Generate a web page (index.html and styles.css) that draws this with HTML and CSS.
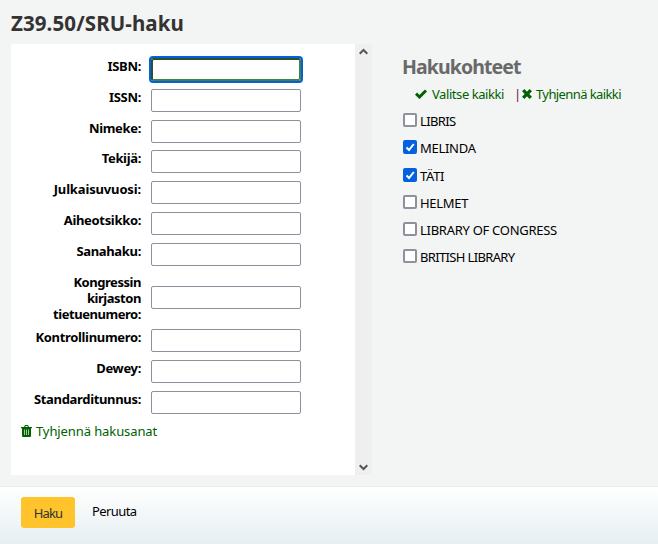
FILE: index.html
```
<!DOCTYPE html>
<html lang="fi">
<head>
<meta charset="utf-8">
<title>Z39.50/SRU-haku</title>
<link rel="stylesheet" href="styles.css">
</head>
<body>
<form class="page">
  <h1><span>Z39.50/SRU-haku</span></h1>
  <main class="columns">
    <section class="search">
      <div class="fields">
        <div class="row"><label for="f1">ISBN:</label><input class="text focused" id="f1" type="text"></div>
        <div class="row"><label for="f2">ISSN:</label><input class="text" id="f2" type="text"></div>
        <div class="row"><label for="f3">Nimeke:</label><input class="text" id="f3" type="text"></div>
        <div class="row"><label for="f4">Tekijä:</label><input class="text" id="f4" type="text"></div>
        <div class="row"><label class="wide" for="f5">Julkaisuvuosi:</label><input class="text" id="f5" type="text"></div>
        <div class="row"><label for="f6">Aiheotsikko:</label><input class="text" id="f6" type="text"></div>
        <div class="row"><label for="f7">Sanahaku:</label><input class="text" id="f7" type="text"></div>
        <div class="row tall"><label for="f8">Kongressin kirjaston tietuenumero:</label><input class="text" id="f8" type="text"></div>
        <div class="row"><label for="f9">Kontrollinumero:</label><input class="text" id="f9" type="text"></div>
        <div class="row"><label for="f10">Dewey:</label><input class="text" id="f10" type="text"></div>
        <div class="row"><label for="f11">Standarditunnus:</label><input class="text" id="f11" type="text"></div>
        <a class="link clear"><svg width="11" height="12" viewBox="0 0 11 12"><path fill="currentColor" d="M0 2h3l.7-1.500Q4 0 4.500 0h2q.5 0 .8.500L8 2h3v1.300h-1V11q0 1-1 1H2q-1 0-1-1V3.300H0zM4.200 2h2.600l-.5-1H4.700z" fill-rule="evenodd"/><path d="M3.500 4.500v5.500m2-5.500v5.500m2-5.500v5.500" stroke="#b5d0b5" stroke-width=".9"/></svg><span>Tyhjennä hakusanat</span></a>
      </div>
      <div class="scrollbar">
        <svg width="9" height="7" viewBox="0 0 9 7"><path d="M.7 5.800 4.500 2l3.800 3.800" fill="none" stroke="#555" stroke-width="2"/></svg>
        <svg width="9" height="7" viewBox="0 0 9 7"><path d="M.7 1.200 4.500 5l3.800-3.800" fill="none" stroke="#555" stroke-width="2"/></svg>
      </div>
    </section>
    <section class="targets">
      <h2><span>Hakukohteet</span></h2>
      <div class="actions">
        <a class="link all"><svg width="12" height="10" viewBox="0 0 12 10"><path d="M1 4.700 4.500 8 11 1.500" fill="none" stroke="currentColor" stroke-width="3"/></svg><span>Valitse kaikki</span></a>
        <span class="bar">|</span>
        <a class="link none"><svg width="10" height="10" viewBox="0 0 10 10"><path d="m1.200 1.200 7.600 7.600m0-7.600L1.200 8.800" stroke="currentColor" stroke-width="3.300"/></svg><span>Tyhjennä kaikki</span></a>
      </div>
      <label class="target narrow"><input type="checkbox"><span>LIBRIS</span></label>
      <label class="target"><input type="checkbox" checked><svg viewBox="0 0 14 14"><path d="m3.500 7.500 2.500 2.500 4.800-6"/></svg><span>MELINDA</span></label>
      <label class="target"><input type="checkbox" checked><svg viewBox="0 0 14 14"><path d="m3.500 7.500 2.500 2.500 4.800-6"/></svg><span>TÄTI</span></label>
      <label class="target"><input type="checkbox"><span>HELMET</span></label>
      <label class="target"><input type="checkbox"><span>LIBRARY OF CONGRESS</span></label>
      <label class="target narrow"><input type="checkbox"><span>BRITISH LIBRARY</span></label>
    </section>
  </main>
  <footer>
    <button class="submit" type="button">Haku</button>
    <a class="cancel">Peruuta</a>
  </footer>
</form>
</body>
</html>
```
FILE: styles.css
```
* { box-sizing: border-box; }
body {
  margin: 0;
  background: #f3f4f4;
  color: #000;
  font: 13px/16px "Noto Sans", "Open Sans", sans-serif;
}
.page { height: 544px; display: flex; flex-direction: column; overflow: hidden; }
h1 {
  margin: 0;
  height: 44px;
  padding: 10px 0 0 11px;
  font-size: 20.5px;
  line-height: 27px;
  letter-spacing: 0.1px;
  color: #333;
}
.columns { height: 442px; display: flex; padding-left: 11px; }
.search { width: 361px; height: 431px; display: flex; }
.fields { width: 344px; padding: 10px; background: #fff; }
.row { display: flex; height: 30.8px; padding-top: 4px; }
.row label {
  width: 120px;
  margin-right: 10px;
  font-weight: bold;
  text-align: right;
  letter-spacing: -0.33px;
}
.row .wide { letter-spacing: -0.15px; }
.tall { height: 55.4px; }
.tall label { padding-left: 20px; letter-spacing: -0.45px; }
.tall .text { margin-top: 12.400px; }
.text {
  width: 150px;
  height: 23px;
  margin: 0;
  border: 1px solid #8f8f9d;
  border-radius: 2px;
  background: #fff;
}
.focused {
  border-color: #285428 #418340 #418340 #285428;
  box-shadow: inset 1px 1px #285428, inset -1px -1px #418340;
  outline: 2px solid #0560df;
}
.link { display: flex; align-items: center; color: #006100; }
.link svg { flex: none; }
.clear { margin-top: 4px; height: 20px; gap: 4px; letter-spacing: -0.1px; }
.scrollbar {
  width: 17px;
  padding: 4px 0;
  background: #efefef;
  display: flex;
  flex-direction: column;
  align-items: center;
  justify-content: space-between;
}
.targets { padding: 9px 0 0 31px; }
h2 {
  margin: 0 0 0 -1px;
  font-size: 19.5px;
  line-height: 27px;
  letter-spacing: -0.9px;
  color: #696969;
}
.actions { display: flex; height: 20px; margin: 4px 0 7px 12px; align-items: center; white-space: nowrap; }
.all { gap: 5px; width: 99px; letter-spacing: -0.43px; }
.bar { width: 8px; color: #5e1a4e; }
.none { gap: 4px; letter-spacing: -0.6px; }
.target { display: flex; position: relative; height: 27.25px; padding-top: 2px; }
.target input {
  appearance: none;
  width: 14px;
  height: 14px;
  margin: 0 3px 0 0;
  border: 2px solid #8f8f9d;
  border-radius: 2px;
  background: #fff;
}
.target input:checked { background: #0560df; border-color: #0560df; }
.target span { line-height: 16px; letter-spacing: -0.28px; white-space: nowrap; }
.narrow span { letter-spacing: -0.65px; }
.target svg { position: absolute; left: 0; top: 2px; width: 14px; height: 14px; fill: none; stroke: #fff; stroke-width: 2; }
footer {
  flex: 1;
  display: flex;
  align-items: flex-start;
  padding: 10px 21px;
  border-top: 1px solid #ebecec;
  background: linear-gradient(#fff, #e6eff2);
}
.submit {
  width: 54px;
  height: 31px;
  padding: 0;
  border: 0;
  border-radius: 3px;
  background: #ffc32b;
  color: #333;
  font: inherit;
  letter-spacing: -0.8px;
}
.cancel { margin: 6px 0 0 17px; letter-spacing: -0.6px; }
```
